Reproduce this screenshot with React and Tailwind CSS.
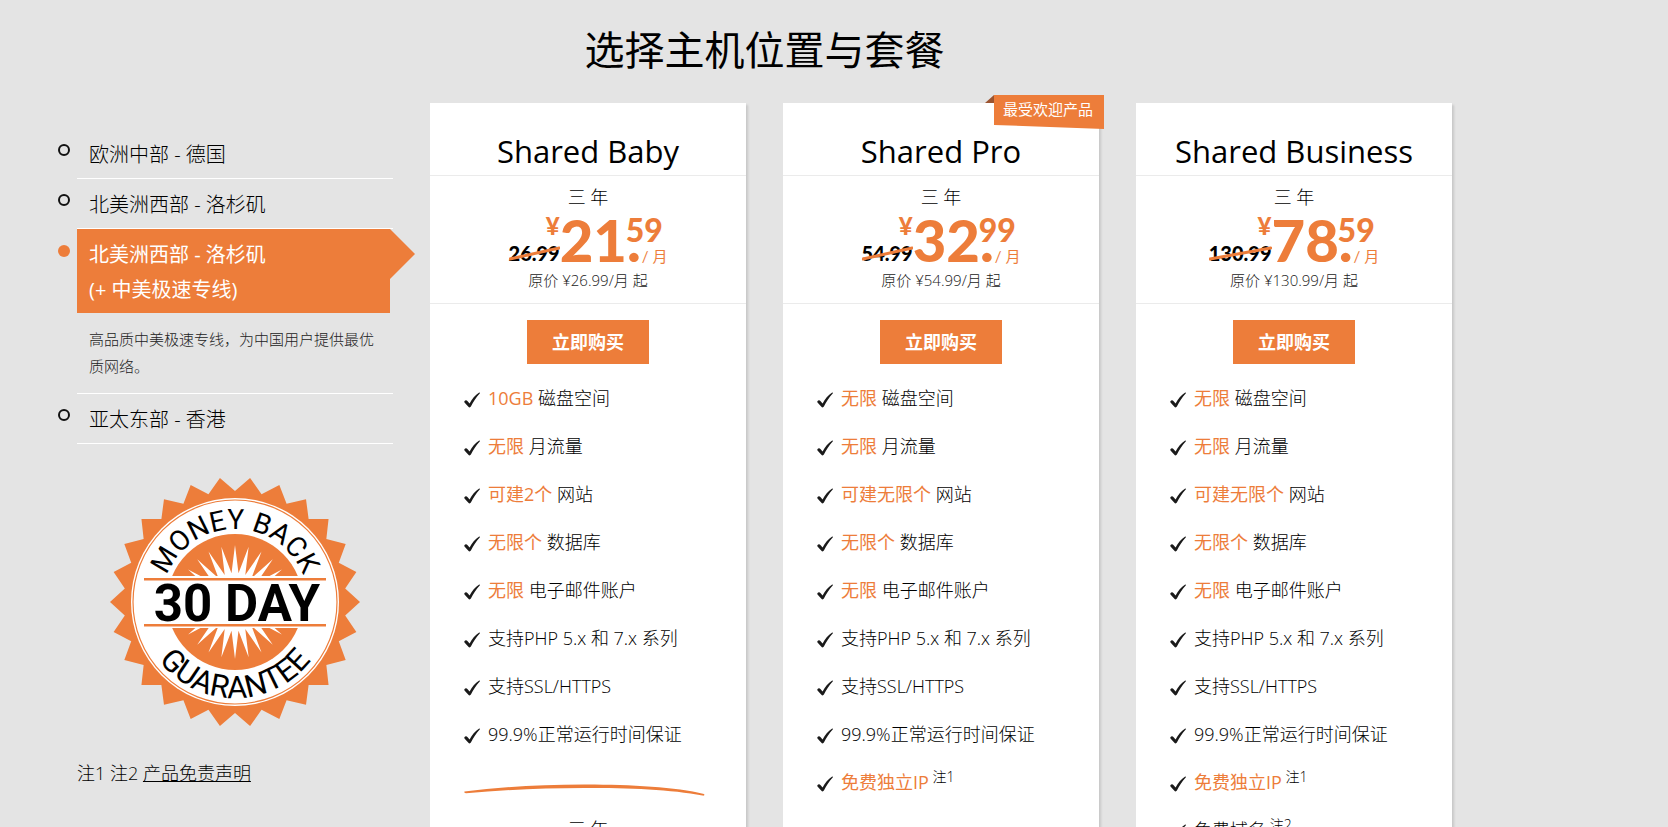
const regions = [
  { name: "欧洲中部 - 德国" },
  { name: "北美洲西部 - 洛杉矶" },
  {
    name: "北美洲西部 - 洛杉矶",
    line: "(+ 中美极速专线)",
    active: true,
    description: "高品质中美极速专线，为中国用户提供最优质网络。",
  },
  { name: "亚太东部 - 香港" },
];

const common = [
  { mark: "无限", text: " 月流量" },
  { mark: "可建无限个", text: " 网站" },
  { mark: "无限个", text: " 数据库" },
  { mark: "无限", text: " 电子邮件账户" },
  { text: "支持PHP 5.x 和 7.x 系列" },
  { text: "支持SSL/HTTPS" },
  { text: "99.9%正常运行时间保证" },
];

const plans = [
  {
    name: "Shared Baby",
    old: "26.99",
    price: ["21", "59"],
    features: [
      { mark: "10GB", text: " 磁盘空间" },
      { mark: "无限", text: " 月流量" },
      { mark: "可建2个", text: " 网站" },
      ...common.slice(2),
    ],
  },
  {
    name: "Shared Pro",
    old: "54.99",
    price: ["32", "99"],
    popular: true,
    features: [
      { mark: "无限", text: " 磁盘空间" },
      ...common,
      { mark: "免费独立IP", note: "注1" },
    ],
  },
  {
    name: "Shared Business",
    old: "130.99",
    price: ["78", "59"],
    features: [
      { mark: "无限", text: " 磁盘空间" },
      ...common,
      { mark: "免费独立IP", note: "注1" },
      { text: "免费域名", note: "注2" },
    ],
  },
];

//points of a star, the first tip is at the given angle
const star = (count, outer, inner, start) => {
  const points = [];
  for (let i = 0; i < count * 2; i++) {
    const r = i % 2 === 0 ? outer : inner;
    const a = start + (i * Math.PI) / count;
    points.push(
      `${(r * Math.cos(a)).toFixed(2)},${(r * Math.sin(a)).toFixed(2)}`
    );
  }
  return points.join(" ");
};

function Check() {
  return (
    <svg className="mt-1 h-4 w-4 shrink-0" viewBox="0 0 16 16" aria-hidden="true">
      <path
        d="M0.4 9.2C1.2 8 2.6 8 3.4 8.9L5.6 11.6C8 7 11 3.2 15.2 0.6C15.8 0.4 16.2 1 15.7 1.5C12 5.4 9.4 9.6 6.9 14.6C6.4 15.6 5 15.7 4.4 14.8L0.7 10.7C0.3 10.2 0.2 9.7 0.4 9.2Z"
        fill="#1a1a1a"
      />
    </svg>
  );
}

function Swoosh() {
  return (
    <svg
      className="h-3 w-full"
      viewBox="0 0 241 12"
      preserveAspectRatio="none"
      aria-hidden="true"
    >
      <path
        d="M0.5 7.5C35 3 75 0.6 120 0.5C165 0.4 212 3 240 10C241 11 240 12 238.5 11.6C208 5.5 165 4 120 4C80 4 40 6 2 9.2C0.4 9.2 0 8.2 0.5 7.5Z"
        fill="#ed7d3a"
      />
    </svg>
  );
}

function Badge() {
  return (
    <svg
      className="mx-auto block h-[250px] w-[250px]"
      viewBox="-125 -125 250 250"
      role="img"
      aria-label="30 day money back guarantee"
    >
      <defs>
        <path id="arcTop" d="M-73 0A73 73 0 0 1 73 0" />
        <path id="arcBottom" d="M-96 0A96 96 0 0 0 96 0" />
        <clipPath id="discClip">
          <rect x="-70" y="-70" width="140" height="44" />
          <rect x="-70" y="26" width="140" height="44" />
        </clipPath>
      </defs>
      <polygon points={star(26, 125, 111, 0)} fill="#ed7d3a" />
      <circle r="104" fill="#fff" />
      <circle r="102" fill="none" stroke="#ed7d3a" strokeWidth="1.2" />
      <g clipPath="url(#discClip)">
        <circle r="68" fill="#ed7d3a" />
        <polygon points={star(26, 57, 29, -Math.PI / 2)} fill="#fff" />
      </g>
      <path
        d="M-91 -22.7H91M-91 23.3H91"
        stroke="#ed7d3a"
        strokeWidth="2.4"
      />
      <text
        className="font-[Roboto,sans-serif] text-[28px] font-normal"
        textAnchor="middle"
      >
        <textPath href="#arcTop" startOffset="50%">
          MONEY BACK
        </textPath>
      </text>
      <text
        className="font-[Roboto,sans-serif] text-[31px] font-normal"
        textAnchor="middle"
      >
        <textPath href="#arcBottom" startOffset="50%">
          GUARANTEE
        </textPath>
      </text>
      <text
        className="font-[Roboto,sans-serif] text-[51px] font-bold"
        textAnchor="middle"
        x="2"
        y="19"
      >
        30 DAY
      </text>
    </svg>
  );
}

function Region({ region }) {
  return (
    <li className="relative">
      <span
        className={
          region.active
            ? "absolute top-4 -left-[19px] h-3 w-3 rounded-full bg-[#ed7d3a]"
            : "absolute top-[15px] -left-[19px] h-3 w-3 rounded-full border-2 border-[#111]"
        }
      />
      <a
        href="#plans"
        className={
          region.active
            ? "relative mr-[3px] block bg-[#ed7d3a] px-3 pt-2 pb-1.5 text-xl leading-[35px] font-normal text-white"
            : "block border-b border-white px-3 pt-2 pb-1.5 text-xl leading-[35px] text-black"
        }
      >
        {region.name}
        {region.line && <span className="block">{region.line}</span>}
        {region.active && (
          <svg
            className="absolute top-0 left-full h-[50px] w-[25px]"
            viewBox="0 0 25 50"
            aria-hidden="true"
          >
            <path d="M0 0L25 25L0 50Z" fill="#ed7d3a" />
          </svg>
        )}
      </a>
      {region.description && (
        <p className="border-b border-white px-3 py-[13px] text-[15px] leading-[27px] text-[#222]">
          {region.description}
        </p>
      )}
    </li>
  );
}

function Price({ plan }) {
  return (
    <div className="pt-2 pb-[13px] text-center">
      <div className="text-lg leading-[26px]">三 年</div>
      <div className="flex h-[60px] justify-center font-[Lato,'Noto_Sans_CJK_SC',sans-serif] font-black text-[#ed7d3a]">
        <div className="text-right">
          <div className="text-2xl leading-8">¥</div>
          <div className="relative text-xl leading-[22px] text-black">
            {plan.old}
            <svg
              className="absolute inset-0 h-full w-full"
              viewBox="0 0 54 22"
              preserveAspectRatio="none"
              aria-hidden="true"
            >
              <path
                d="M1 17L53 6"
                stroke="#ed7d3a"
                strokeWidth="3"
                strokeLinecap="round"
              />
            </svg>
          </div>
        </div>
        <div className="text-[58px] leading-[60px]">{plan.price[0]}.</div>
        <div className="-ml-[15px] pt-1 text-left">
          <div className="text-[32px] leading-8">{plan.price[1]}</div>
          <div className="pl-4 text-[15px] leading-5 font-normal">/ 月</div>
        </div>
      </div>
      <div className="text-[15px] leading-5 text-[#222]">
        原价 ¥{plan.old}/月 起
      </div>
    </div>
  );
}

function Plan({ plan }) {
  return (
    <section className="relative bg-white shadow-[2px_2px_2px_#c8c8c8]">
      {plan.popular && (
        <div className="absolute -top-2 -right-[5px] h-[34px] w-[119px]">
          <svg
            className="absolute inset-0 h-full w-full"
            viewBox="0 0 119 34"
            aria-hidden="true"
          >
            <path d="M9 0V8H0Z" fill="#9c5430" />
            <path d="M9 0H119V34L9 30Z" fill="#ed7d3a" />
          </svg>
          <span className="relative block pl-[18px] text-[15px] leading-7 font-normal text-white">
            最受欢迎产品
          </span>
        </div>
      )}
      <h2 className="border-b border-[#ebebeb] pt-[26px] pb-0.5 text-center text-[31px] leading-[44px] font-normal">
        {plan.name}
      </h2>
      <div className="border-b border-[#ebebeb]">
        <Price plan={plan} />
      </div>
      <div className="pt-4 text-center">
        <button
          type="button"
          className="h-11 w-[122px] cursor-pointer bg-[#ed7d3a] text-lg font-bold text-white"
        >
          立即购买
        </button>
      </div>
      <ul className="mt-2.5 pl-[34px]">
        {plan.features.map((item, index) => (
          <li
            key={index}
            className="flex h-12 items-center gap-2 text-lg whitespace-pre"
          >
            <Check />
            <span>
              {item.mark && (
                <span className="font-normal text-[#ed7d3a]">{item.mark}</span>
              )}
              {item.text}
              {item.note && <sup className="text-sm"> {item.note}</sup>}
            </span>
          </li>
        ))}
      </ul>
      <div className="pt-[26px] pr-[41px] pl-[34px]">
        <Swoosh />
      </div>
      <div className="pt-3">
        <Price plan={plan} />
      </div>
    </section>
  );
}

function App() {
  return (
    <main className="h-screen overflow-hidden bg-[#e4e4e4] pr-[216px] pl-[77px] font-['Open_Sans','Noto_Sans_CJK_SC',sans-serif] font-light text-black">
      <h1 className="pt-5 pb-[23px] text-center text-[40px] leading-[60px] font-normal">
        选择主机位置与套餐
      </h1>
      <div className="grid grid-cols-4 gap-[37px]" id="plans">
        <aside className="pt-[26px]">
          <ul>
            {regions.map((region, index) => (
              <Region key={index} region={region} />
            ))}
          </ul>
          <div className="pt-[33px]">
            <Badge />
          </div>
          <p className="pt-8 text-lg">
            注1 注2{" "}
            <a href="#disclaimer" className="underline">
              产品免责声明
            </a>
          </p>
        </aside>
        {plans.map((plan) => (
          <Plan key={plan.name} plan={plan} />
        ))}
      </div>
    </main>
  );
}

export default App;
